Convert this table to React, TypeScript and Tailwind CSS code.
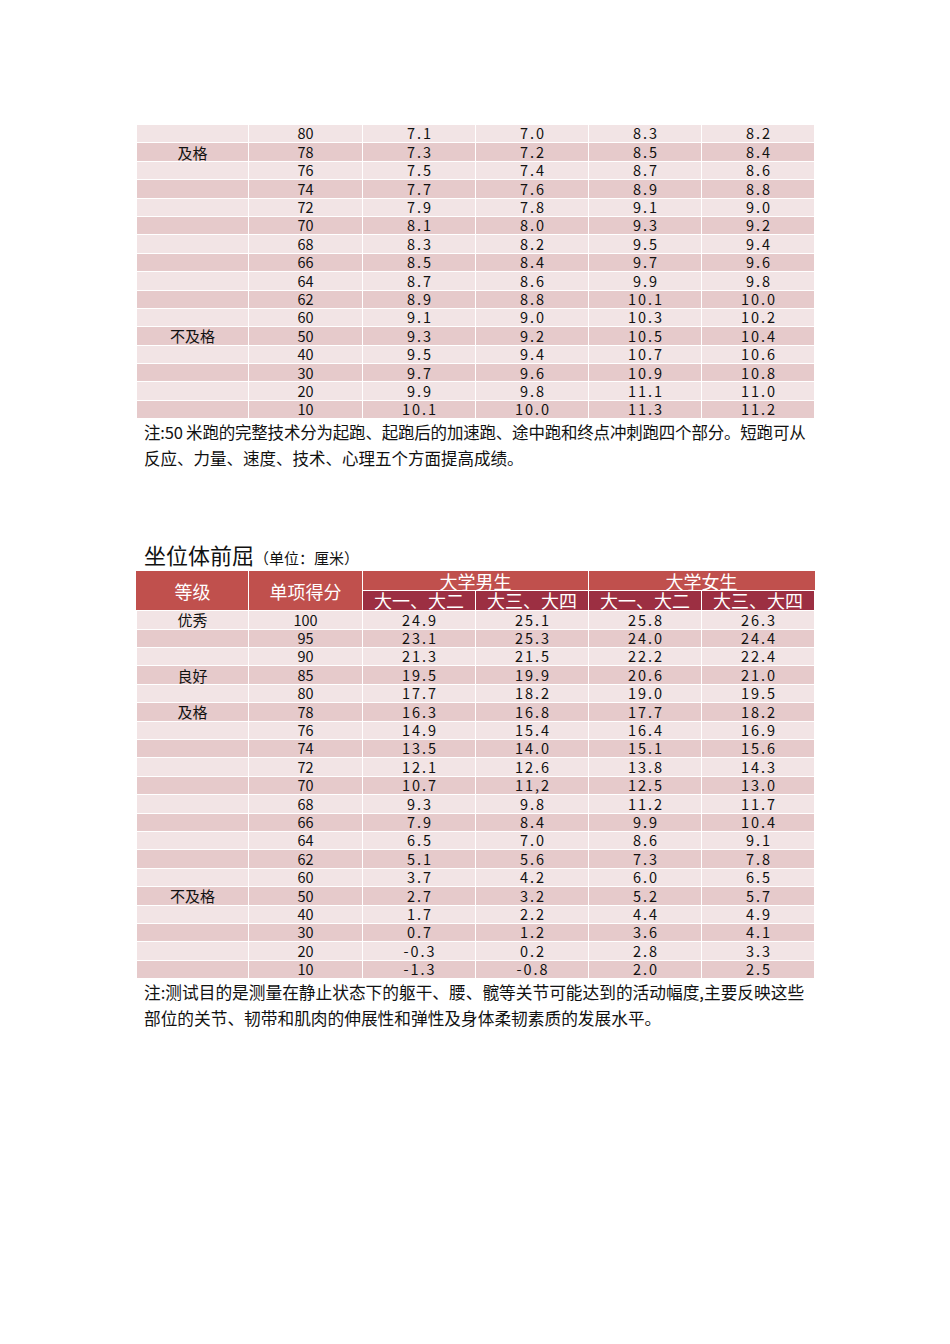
import React from "react";

type Row = { grade?: string; score: string; vals: string[] };

const runRows: Row[] = [
  { score: "80", vals: ["7.1", "7.0", "8.3", "8.2"] },
  { grade: "及格", score: "78", vals: ["7.3", "7.2", "8.5", "8.4"] },
  { score: "76", vals: ["7.5", "7.4", "8.7", "8.6"] },
  { score: "74", vals: ["7.7", "7.6", "8.9", "8.8"] },
  { score: "72", vals: ["7.9", "7.8", "9.1", "9.0"] },
  { score: "70", vals: ["8.1", "8.0", "9.3", "9.2"] },
  { score: "68", vals: ["8.3", "8.2", "9.5", "9.4"] },
  { score: "66", vals: ["8.5", "8.4", "9.7", "9.6"] },
  { score: "64", vals: ["8.7", "8.6", "9.9", "9.8"] },
  { score: "62", vals: ["8.9", "8.8", "10.1", "10.0"] },
  { score: "60", vals: ["9.1", "9.0", "10.3", "10.2"] },
  { grade: "不及格", score: "50", vals: ["9.3", "9.2", "10.5", "10.4"] },
  { score: "40", vals: ["9.5", "9.4", "10.7", "10.6"] },
  { score: "30", vals: ["9.7", "9.6", "10.9", "10.8"] },
  { score: "20", vals: ["9.9", "9.8", "11.1", "11.0"] },
  { score: "10", vals: ["10.1", "10.0", "11.3", "11.2"] },
];

const reachRows: Row[] = [
  { grade: "优秀", score: "100", vals: ["24.9", "25.1", "25.8", "26.3"] },
  { score: "95", vals: ["23.1", "25.3", "24.0", "24.4"] },
  { score: "90", vals: ["21.3", "21.5", "22.2", "22.4"] },
  { grade: "良好", score: "85", vals: ["19.5", "19.9", "20.6", "21.0"] },
  { score: "80", vals: ["17.7", "18.2", "19.0", "19.5"] },
  { grade: "及格", score: "78", vals: ["16.3", "16.8", "17.7", "18.2"] },
  { score: "76", vals: ["14.9", "15.4", "16.4", "16.9"] },
  { score: "74", vals: ["13.5", "14.0", "15.1", "15.6"] },
  { score: "72", vals: ["12.1", "12.6", "13.8", "14.3"] },
  { score: "70", vals: ["10.7", "11,2", "12.5", "13.0"] },
  { score: "68", vals: ["9.3", "9.8", "11.2", "11.7"] },
  { score: "66", vals: ["7.9", "8.4", "9.9", "10.4"] },
  { score: "64", vals: ["6.5", "7.0", "8.6", "9.1"] },
  { score: "62", vals: ["5.1", "5.6", "7.3", "7.8"] },
  { score: "60", vals: ["3.7", "4.2", "6.0", "6.5"] },
  { grade: "不及格", score: "50", vals: ["2.7", "3.2", "5.2", "5.7"] },
  { score: "40", vals: ["1.7", "2.2", "4.4", "4.9"] },
  { score: "30", vals: ["0.7", "1.2", "3.6", "4.1"] },
  { score: "20", vals: ["-0.3", "0.2", "2.8", "3.3"] },
  { score: "10", vals: ["-1.3", "-0.8", "2.0", "2.5"] },
];

function Cols() {
  return (
    <colgroup>
      <col className="w-[112px]" />
      <col className="w-[114px]" />
      <col className="w-[113px]" />
      <col className="w-[113px]" />
      <col className="w-[113px]" />
      <col className="w-[113px]" />
    </colgroup>
  );
}

function Body({ rows }: { rows: Row[] }) {
  return (
    <tbody>
      {rows.map((r, i) => (
        <tr key={i} className={i % 2 === 0 ? "bg-[#f2e4e5]" : "bg-[#e6cacb]"}>
          <td className="h-[18.4px] border border-white p-0 text-center text-[15px] leading-none">{r.grade}</td>
          <td className="h-[18.4px] border border-white p-0 text-center text-[14.5px] leading-none">{r.score}</td>
          {r.vals.map((v, j) => (
            <td key={j} className="h-[18.4px] border border-white p-0 pl-[2px] text-center text-[14.5px] leading-none tracking-[2px]">
              {v}
            </td>
          ))}
        </tr>
      ))}
    </tbody>
  );
}

const sub = "h-[20px] border border-white p-0 text-[18px] font-normal leading-[17px]";

export default function App() {
  return (
    <div className="min-h-[1344px] w-[950px] bg-white pl-[136px] pt-[124px] text-[#111] [font-family:'Noto_Sans_CJK_SC',sans-serif]">
      <table className="w-[678px] table-fixed border-collapse">
        <Cols />
        <Body rows={runRows} />
      </table>
      <div className="pl-[8px] text-[16.5px] leading-[26px] whitespace-nowrap">
        <p className="tracking-[-0.2px]">注:50 米跑的完整技术分为起跑、起跑后的加速跑、途中跑和终点冲刺跑四个部分。短跑可从</p>
        <p>反应、力量、速度、技术、心理五个方面提高成绩。</p>
      </div>

      <h2 className="mt-[70px] pl-[8px] text-[22px] leading-[26px]">
        坐位体前屈<span className="text-[15px]">（单位：厘米）</span>
      </h2>
      <table className="w-[678px] table-fixed border-collapse">
        <Cols />
        <thead className="text-white">
          <tr className="bg-[#c0504d]">
            <th rowSpan={2} className="border border-white border-t-[#c0504d] border-l-[#c0504d] p-0 text-[18px] font-normal leading-none">等级</th>
            <th rowSpan={2} className="border border-white border-t-[#c0504d] p-0 text-[18px] font-normal leading-none">单项得分</th>
            <th colSpan={2} className="h-[19px] border border-white border-t-[#c0504d] p-0 text-[18px] font-normal leading-[16px]">大学男生</th>
            <th colSpan={2} className="h-[19px] border border-white border-t-[#c0504d] border-r-[#c0504d] p-0 text-[18px] font-normal leading-[16px]">大学女生</th>
          </tr>
          <tr className="bg-[#9c2f42]">
            <th className={sub}>大一、大二</th>
            <th className={sub}>大三、大四</th>
            <th className={sub}>大一、大二</th>
            <th className={sub}>大三、大四</th>
          </tr>
        </thead>
        <Body rows={reachRows} />
      </table>
      <div className="pl-[8px] text-[16.7px] leading-[26px] whitespace-nowrap">
        <p>注:测试目的是测量在静止状态下的躯干、腰、髋等关节可能达到的活动幅度,主要反映这些</p>
        <p>部位的关节、韧带和肌肉的伸展性和弹性及身体柔韧素质的发展水平。</p>
      </div>
    </div>
  );
}
